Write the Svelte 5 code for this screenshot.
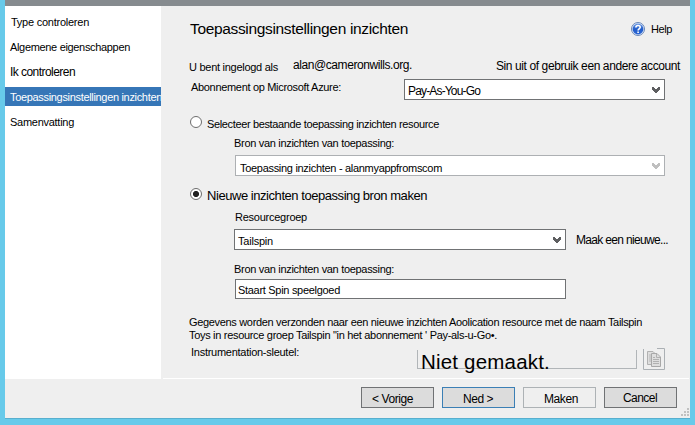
<script>
  const steps = [
    { label: 'Type controleren', width: 78, indent: 6 },
    { label: 'Algemene eigenschappen', width: 120, indent: 5 },
    { label: 'Ik controleren', width: 65, indent: 5, size: 12 },
    { label: 'Toepassingsinstellingen inzichten', width: 152, indent: 5, active: true },
    { label: 'Samenvatting', width: 64, indent: 5 }
  ];

  // Spreads the letters of a label over the given width.
  function fit(node, width) {
    const range = document.createRange();
    range.selectNodeContents(node);
    const natural = range.getBoundingClientRect().width;
    node.style.letterSpacing = `${(width - natural) / node.textContent.length}px`;
  }
</script>

{#snippet chevron()}
  <svg class="chevron" width="8" height="6" viewBox="0 0 8 6"><path d="M0 0H2V1H3V2H5V1H6V0H8V3H7V4H6V5H5V6H3V5H2V4H1V3H0Z" fill="currentColor" shape-rendering="crispEdges" /></svg>
{/snippet}

<div class="frame">
  <div class="titlebar"></div>
  <div class="body">
    <nav>
      {#each steps as s}
        <div class="step" class:active={s.active} class:large={s.size === 12} style="padding-left: {s.indent}px">
          <span use:fit={s.width}>{s.label}</span>
        </div>
      {/each}
    </nav>
    <main>
      <div class="row head">
        <h1 use:fit={218}>Toepassingsinstellingen inzichten</h1>
        <div class="help">
          <svg width="16" height="16" viewBox="0 0 16 16">
            <defs><linearGradient id="ball" x1="0" y1="0" x2="0" y2="1"><stop offset="0" stop-color="#6f9be6" /><stop offset=".5" stop-color="#225dca" /><stop offset="1" stop-color="#2b66d4" /></linearGradient></defs>
            <circle cx="8" cy="8" r="6.5" fill="#dce8f9" stroke="#6886b8" />
            <circle cx="8" cy="8" r="5.4" fill="url(#ball)" />
            <path d="M5.9 6.5C5.9 3.9 10.2 3.9 10.2 6.3C10.2 7.8 8.1 7.8 8.1 9.4M8.1 10.5V12" fill="none" stroke="#fff" stroke-width="1.6" />
          </svg>
          <span use:fit={21}>Help</span>
        </div>
      </div>

      <div class="row account">
        <span use:fit={89}>U bent ingelogd als</span>
        <span class="mid email" use:fit={119}>alan@cameronwills.org.</span>
        <span class="mid switch" use:fit={184}>Sin uit of gebruik een andere account</span>
      </div>

      <div class="row subscription">
        <span use:fit={150}>Abonnement op Microsoft Azure:</span>
        <div class="field combo"><span class="mid" use:fit={72}>Pay-As-You-Go</span>{@render chevron()}</div>
      </div>

      <div class="row option">
        <i class="radio"></i>
        <span use:fit={232}>Selecteer bestaande toepassing inzichten resource</span>
      </div>
      <div class="group existing">
        <span use:fit={160}>Bron van inzichten van toepassing:</span>
        <div class="field combo disabled"><span use:fit={202}>Toepassing inzichten - alanmyappfromscom</span>{@render chevron()}</div>
      </div>

      <div class="row option new">
        <i class="radio on"></i>
        <span class="big" use:fit={220}>Nieuwe inzichten toepassing bron maken</span>
      </div>
      <div class="group">
        <span class="nudge" use:fit={72}>Resourcegroep</span>
        <div class="row pick">
          <div class="field combo"><span use:fit={35}>Tailspin</span>{@render chevron()}</div>
          <span class="mid create" use:fit={92}>Maak een nieuwe...</span>
        </div>
        <span use:fit={160}>Bron van inzichten van toepassing:</span>
        <div class="field name"><span use:fit={102}>Staart Spin speelgoed</span></div>
      </div>

      <div class="note">
        <span use:fit={453}>Gegevens worden verzonden naar een nieuwe inzichten Aoolication resource met de naam Tailspin</span>
        <span use:fit={308}>Toys in resource groep Tailspin "in het abonnement ' Pay-als-u-Go•.</span>
      </div>

      <div class="row key">
        <span use:fit={108}>Instrumentation-sleutel:</span>
        <div class="value"><span use:fit={129}>Niet gemaakt.</span></div>
        <div class="copy">
          <svg width="22" height="22" viewBox="0 0 22 22">
            <path d="M.5 1V21.5H21.5V.5H14" fill="none" stroke="#abb0b4" />
            <path d="M4.5 3.5H10L12.5 6V16.5H4.5Z" fill="#dedede" stroke="#b1b1b1" />
            <path d="M6 7H8M6 9H8M6 11H8M6 13H8" stroke="#b8b8b8" />
            <path d="M8.5 5.5H14L17.5 9V18.5H8.5Z" fill="#dedede" stroke="#a8a8a8" />
            <path d="M13.5 6V9.5H17M10 9.5H12M10 11.5H16M10 13.5H16M10 15.5H16" fill="none" stroke="#b1b1b1" />
          </svg>
        </div>
      </div>
    </main>
  </div>

  <footer>
    <button class="prev"><span use:fit={41}>&lt; Vorige</span></button>
    <button class="next"><span use:fit={30}>Ned &gt;</span></button>
    <button class="make"><span use:fit={34}>Maken</span></button>
    <button class="cancel"><span use:fit={34}>Cancel</span></button>
    <svg class="grip" width="9" height="9" viewBox="0 0 9 9"><path d="M7 0h2v2h-2zM7 3h2v2h-2zM7 6h2v2h-2zM4 3h2v2h-2zM4 6h2v2h-2zM1 6h2v2h-2z" fill="#c1c1c1" /></svg>
  </footer>
</div>

<style>
  :global(body) { margin: 0; background: #67caea; }
  .frame {
    box-sizing: border-box; width: 695px; height: 425px; padding: 0 5px;
    background: #67caea; color: #000; overflow: hidden;
    font: 11px/14px "Liberation Sans", Arial, sans-serif;
  }
  .titlebar { height: 6px; background: #868b8f; }
  .body { display: flex; height: 373px; background: #efefef; }
  span, h1 { white-space: nowrap; flex: none; }
  nav { width: 156px; background: #fff; padding-top: 6px; box-sizing: border-box; overflow: hidden; }
  .step { box-sizing: border-box; height: 19px; margin-bottom: 6px; padding-top: 3px; overflow: hidden; display: flex; }
  .step.large { font-size: 12px; }
  .step.active { background: #3676b7; color: #fff; }
  main { box-sizing: border-box; width: 529px; padding-left: 28px; }
  .row { display: flex; align-items: flex-start; }
  .mid { font-size: 12px; }

  .head { height: 53px; }
  h1 { margin: 14px 0 0 1px; font-size: 15.5px; line-height: 18px; font-weight: 400; }
  .help { display: flex; margin-left: auto; padding: 15px 18px 0 0; }
  .help svg { margin-right: 5px; }
  .help span { margin-top: 1px; }

  .account { height: 20px; }
  .account > span:first-child { margin-top: 1px; }
  .email { margin: -1px 0 0 15px; }
  .switch { margin-left: auto; margin-right: 10px; }

  .subscription { height: 37px; }
  .subscription > span { margin: 1px 0 0 2px; }
  .subscription .field { width: 261px; margin-left: auto; margin-right: 25px; }
  .subscription .field span { margin-left: -1px; }

  .field {
    box-sizing: border-box; height: 21px; padding: 4px 4px 0; display: flex;
    justify-content: space-between; background: #fff; border: 1px solid #707274;
  }
  .chevron { margin-top: 3px; color: #5d5e60; }
  .disabled { border-color: #adb0b3; color: #000; }
  .disabled .chevron { color: #bfbfbf; }

  .option { height: 20px; }
  .option span { margin: 1px 0 0 5px; }
  .option .big { font-size: 13px; }
  .radio {
    box-sizing: border-box; width: 12px; height: 12px; margin-left: 1px;
    border: 1px solid #6d6d6d; border-radius: 50%; background: #fff; flex: none;
  }
  .radio.on { background: radial-gradient(circle, #222 0 2.7px, #fff 3.4px); }

  .group { margin-left: 45px; display: flex; flex-direction: column; align-items: flex-start; }
  .existing { height: 52px; }
  .existing .field { width: 430px; margin: 5px 0 0 1px; }
  .existing .field span { margin-top: 1px; }
  .nudge { margin-left: 1px; margin-top: 2px; }
  .new + .group { height: 107px; }
  .pick { height: 33px; margin-top: 5px; }
  .pick .field { width: 332px; margin-right: 10px; }
  .pick .field span { margin-left: -1px; }
  .create { margin-top: 4px; }
  .name { width: 331px; height: 20px; margin: 3px 0 0 1px; padding-top: 3px; padding-left: 2px; }

  .note { display: flex; flex-direction: column; line-height: 13px; height: 29px; margin-top: 1px; }
  .key { height: 34px; }
  .key > span { margin: 0 0 0 2px; }
  .value {
    box-sizing: border-box; width: 220px; height: 19px; margin: 5px 6px 0 auto;
    border: solid #b1b5b8; border-width: 0 1px 1px; font-size: 20.5px; line-height: 24px;
  }
  .value span { display: block; width: 130px; margin-left: 3px; }
  .copy { margin: 3px 25px 0 0; height: 22px; }

  footer {
    position: relative; box-sizing: border-box; display: flex; gap: 8px; height: 40px;
    padding: 8px 0 0 356px; background: #efefef; border-bottom: 1px solid #58afce;
  }
  footer::before { content: ""; position: absolute; left: 158px; right: 1px; top: -1px; height: 1px; background: #fff; }
  button {
    box-sizing: border-box; width: 73px; height: 21px; padding: 0 0 0 10px; margin: 0;
    display: flex; align-items: flex-start; border: 1px solid #707274; background: #dcdcdc;
    color: #000; font: 12px/14px "Liberation Sans", Arial, sans-serif; border-radius: 0;
  }
  button span { margin-top: 4px; }
  .next { border-color: #3b7fb5; padding-left: 20px; }
  .make { border-color: #adb2b5; background: #efefef; padding-left: 20px; }
  .cancel { padding-left: 18px; }
  .cancel span { margin-top: 3px; }
  .grip { position: absolute; right: 1px; bottom: 1px; }
</style>
